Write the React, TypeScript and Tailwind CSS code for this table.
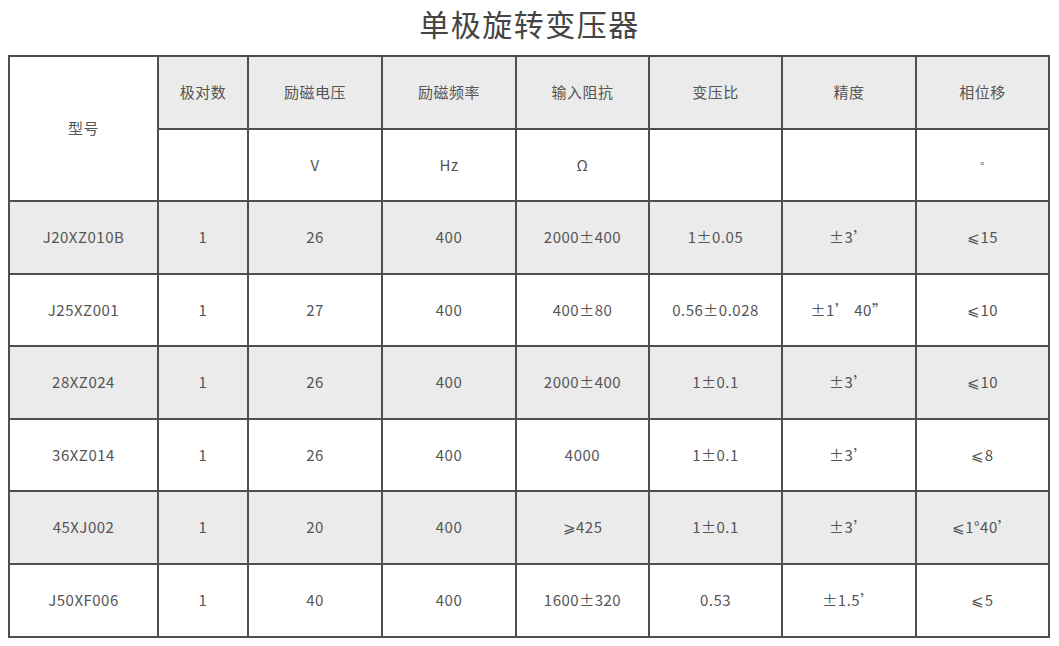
import React from "react";

const rows: string[][] = [
  ["J20XZ010B", "1", "26", "400", "2000±400", "1±0.05", "±3’", "≤15"],
  ["J25XZ001", "1", "27", "400", "400±80", "0.56±0.028", "±1’ 40”", "≤10"],
  ["28XZ024", "1", "26", "400", "2000±400", "1±0.1", "±3’", "≤10"],
  ["36XZ014", "1", "26", "400", "4000", "1±0.1", "±3’", "≤8"],
  ["45XJ002", "1", "20", "400", "≥425", "1±0.1", "±3’", "≤1°40’"],
  ["J50XF006", "1", "40", "400", "1600±320", "0.53", "±1.5’", "≤5"],
];

const fix = (s: string) => s.replace("≤", "⩽").replace("≥", "⩾");

const headers = ["极对数", "励磁电压", "励磁频率", "输入阻抗", "变压比", "精度", "相位移"];
const units = ["", "V", "Hz", "Ω", "", "", "°"];

const cell = "border-2 border-[#4f4f4f] text-center align-middle";

export default function App() {
  return (
    <div
      className="w-[1059px] h-[646px] bg-white text-[#555] overflow-hidden"
      style={{ fontFamily: '"Noto Sans CJK SC", "Noto Sans", sans-serif' }}
    >
      <h1 className="h-[50px] flex items-center justify-center text-[30px] leading-none text-[#444] tracking-[1.5px] pb-[5px]">
        单极旋转变压器
      </h1>
      <table className="ml-[8px] mt-[5px] border-collapse w-[1040px] table-fixed text-[15px] tracking-[0.5px]">
        <colgroup>
          <col className="w-[149px]" />
          <col className="w-[90px]" />
          <col className="w-[134px]" />
          <col className="w-[134px]" />
          <col className="w-[133px]" />
          <col className="w-[133px]" />
          <col className="w-[134px]" />
          <col className="w-[133px]" />
        </colgroup>
        <tbody>
          <tr className="h-[73px]">
            <td rowSpan={2} className={`${cell} bg-white`}>型号</td>
            {headers.map((h) => (
              <td key={h} className={`${cell} bg-[#ebebeb]`}>{h}</td>
            ))}
          </tr>
          <tr className="h-[72px]">
            {units.map((u, i) => (
              <td key={i} className={`${cell} bg-white`}>
                {u === "°" ? <span className="text-[12px]">°</span> : u}
              </td>
            ))}
          </tr>
          {rows.map((r, ri) => (
            <tr key={ri} className={`h-[72.6px] ${ri % 2 === 0 ? "bg-[#ebebeb]" : "bg-white"}`}>
              {r.map((c, ci) => (
                <td key={ci} className={cell}>{fix(c)}</td>
              ))}
            </tr>
          ))}
        </tbody>
      </table>
    </div>
  );
}
